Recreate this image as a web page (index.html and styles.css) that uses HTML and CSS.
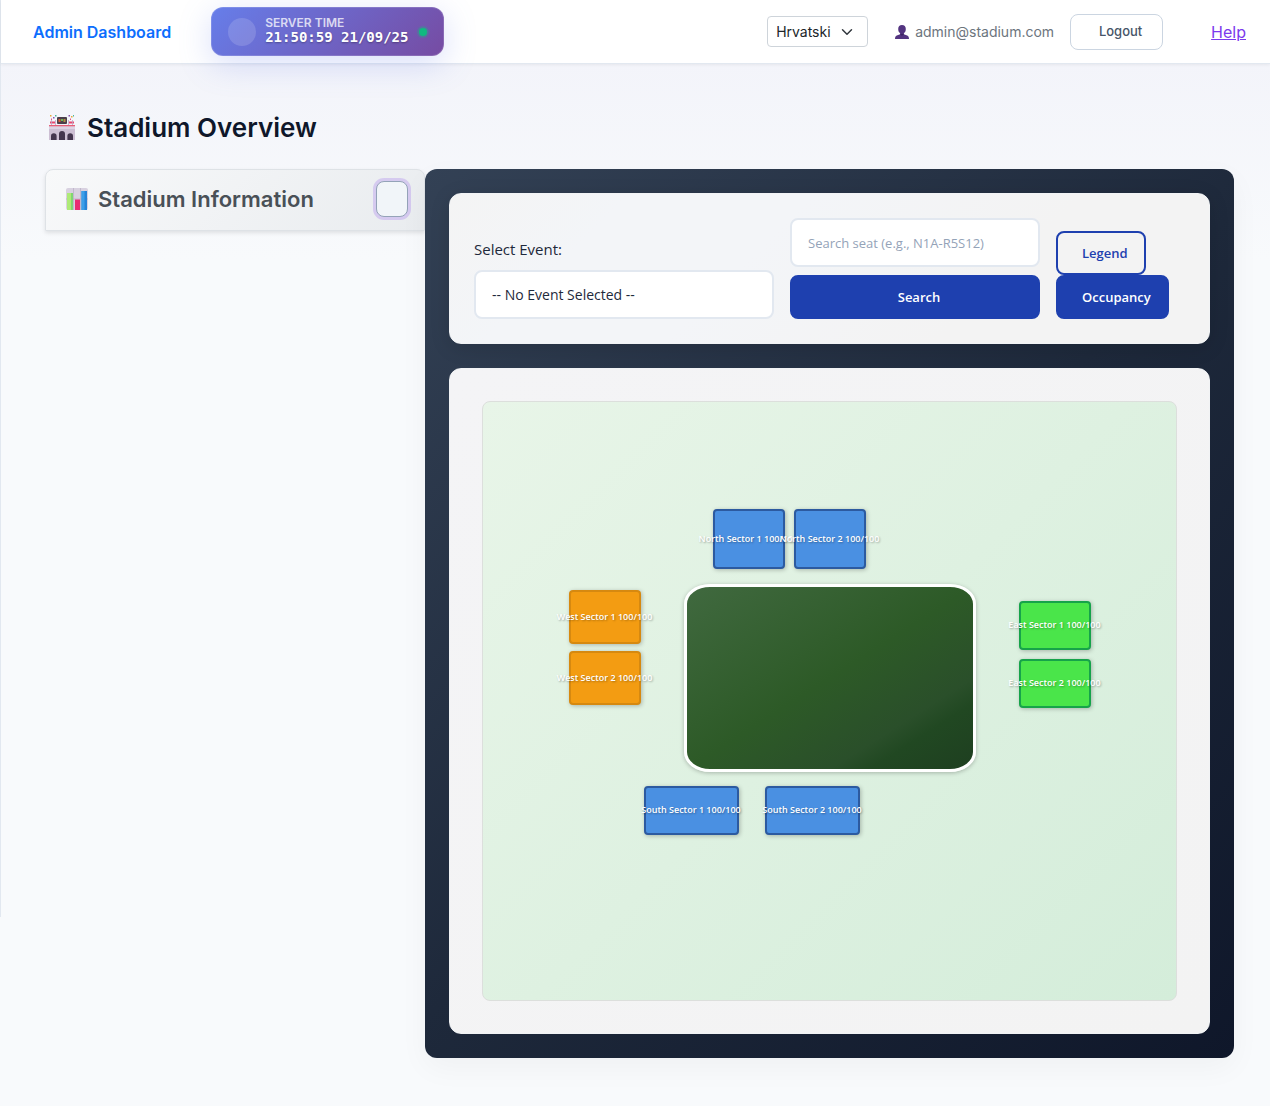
FILE: index.html
```html
<!DOCTYPE html>
<html lang="en">
<head>
  <meta charset="utf-8">
  <meta name="viewport" content="width=device-width, initial-scale=1">
  <title>Admin Dashboard</title>
  <link rel="stylesheet" href="styles.css">
</head>
<body>
  <div class="side-rail"></div>
  <div class="page">
    <header class="topbar">
      <a class="brand" href="#">Admin Dashboard</a>
      <div class="clock">
        <span class="clock-disc"></span>
        <div class="clock-text">
          <span class="clock-label">SERVER TIME</span>
          <span class="clock-value">21:50:59 21/09/25</span>
        </div>
        <span class="clock-status"></span>
      </div>
      <div class="account">
        <select class="language" aria-label="Language">
          <option>Hrvatski</option>
          <option>English</option>
        </select>
        <div class="user">
          <svg class="user-icon" viewBox="0 0 14 14" aria-hidden="true">
            <path d="M7 0C4.600 0 3.200 1.600 3.200 4c0 2 .8 3.600 2 4.300v1L1.800 10.400C.6 10.800 0 12 0 14h14c0-2-.6-3.200-1.800-3.600L8.800 9.300v-1c1.200-.7 2-2.300 2-4.300C10.800 1.600 9.400 0 7 0z" fill="#533480"/>
            <path d="M5.200 8.300c1 .8 2.600.8 3.600 0v1.200L7 10.700 5.200 9.500z" fill="#3c2363"/>
          </svg>
          <span>admin@stadium.com</span>
        </div>
        <button class="logout" type="button">Logout</button>
        <a class="help" href="#">Help</a>
      </div>
    </header>

    <main class="content">
      <h1 class="page-title">
        <svg class="title-icon" viewBox="0 0 26 25" aria-hidden="true">
          <path d="M2 8h22v3H2z" fill="#f4eff8"/>
          <path d="M1 6.500h5v2H1zM20 6.500h5v2h-5z" fill="#e8476f"/>
          <path d="M2.500 5v6M6.500 5v6M19.500 5v6M23.500 5v6" stroke="#b9a6c4" stroke-width=".8"/>
          <rect x="8" y="2" width="10" height="7" rx="1" fill="#4b3f4b"/>
          <path d="M9.500 4h2v3h-2z" fill="#db5a3c"/><path d="M12 4h2v2h-2z" fill="#68b858"/><path d="M14.500 4h2v3h-2z" fill="#b28d45"/>
          <path d="M1 0h1.500v1.500H1zM22 1h1.500v1.500H22z" fill="#e7a93c"/>
          <path d="M4 2h1.500v1.500H4zM19.500 0H21v1.500h-1.500z" fill="#8c55b2"/>
          <path d="M6 0h1.500v1.500H6zM24 0h1v1.500h-1z" fill="#47b7a0"/>
          <path d="M2 3.500h1V5H2zM21 3.500h1V5h-1z" fill="#e0578a"/>
          <path d="M0 10h26v15H0z" fill="#cdbfd4"/>
          <path d="M0 10h26v1.500H0z" fill="#e95f78"/>
          <path d="M0 11.500h26V14H0z" fill="#ded3e4"/>
          <path d="M2 25v-4a2.800 2.800 0 0 1 5.600 0v4zM10 25v-6a3 3 0 0 1 6 0v6zM18.400 25v-4a2.800 2.800 0 0 1 5.600 0v4z" fill="#44364f"/>
        </svg>
        Stadium Overview
      </h1>

      <div class="overview">
        <section class="info-card">
          <h2 class="info-title">
            <svg class="chart-icon" viewBox="0 0 22 22" aria-hidden="true">
              <rect width="22" height="22" rx="2" fill="#d8d1e0"/>
              <path d="M7.500 0v22M14.500 0v22M0 11h22" stroke="#b7aec3" stroke-width=".7"/>
              <path d="M1 5h6v17H1z" fill="#7fd672"/><path d="M1 5h4v17H1z" fill="#aeea77"/>
              <path d="M9 11.500h5V22H9z" fill="#e92c72"/>
              <path d="M15.500 3H21v19h-5.500z" fill="#2684d8"/><path d="M15.500 3h3v19h-3z" fill="#3c9fe8"/>
            </svg>
            Stadium Information
          </h2>
          <button class="info-toggle" type="button" aria-label="Toggle stadium information"></button>
        </section>

        <section class="panel">
          <form class="toolbar">
            <div class="field event-field">
              <label for="event">Select Event:</label>
              <select id="event" class="control">
                <option>-- No Event Selected --</option>
              </select>
            </div>
            <div class="field search-field">
              <input class="control" type="text" placeholder="Search seat (e.g., N1A-R5S12)" aria-label="Search seat">
              <button class="button button-search" type="button">Search</button>
            </div>
            <div class="actions">
              <button class="button button-outline" type="button">Legend</button>
              <button class="button button-indent" type="button">Occupancy</button>
            </div>
          </form>

          <div class="map-card">
            <div class="map">
              <div class="pitch"></div>
              <button type="button" class="sector blue north north-1"><span>North Sector 1 100/100</span></button>
              <button type="button" class="sector blue north north-2"><span>North Sector 2 100/100</span></button>
              <button type="button" class="sector orange west-1"><span>West Sector 1 100/100</span></button>
              <button type="button" class="sector orange west-2"><span>West Sector 2 100/100</span></button>
              <button type="button" class="sector green east-1"><span>East Sector 1 100/100</span></button>
              <button type="button" class="sector green east-2"><span>East Sector 2 100/100</span></button>
              <button type="button" class="sector blue south south-1"><span>South Sector 1 100/100</span></button>
              <button type="button" class="sector blue south south-2"><span>South Sector 2 100/100</span></button>
            </div>
          </div>
        </section>
      </div>
    </main>
  </div>
</body>
</html>
```

FILE: styles.css
```css
* {
  box-sizing: border-box;
}

body {
  margin: 0;
  min-height: 100vh;
  display: flex;
  align-items: flex-start;
  background: linear-gradient(#f3f4fa 60px, #f8fafc 260px) no-repeat #f8fafc;
  color: #0f172a;
  font-family: Inter, "Liberation Sans", sans-serif;
  font-size: 16px;
}

button,
input,
select {
  font: inherit;
}

.side-rail {
  height: 917px;
  border-right: 1px solid #e2e8f0;
}

.page {
  flex: 1;
  min-width: 0;
}

/* Header */

.topbar {
  display: flex;
  align-items: center;
  height: 64px;
  padding: 0 24px 0 32px;
  background: #fff;
  border-bottom: 1px solid #e2e8f0;
  box-shadow: 0 1px 3px rgba(0, 0, 0, 0.06);
}

.brand {
  color: #0d6efd;
  font-weight: 600;
  text-decoration: none;
}

.clock {
  display: flex;
  align-items: center;
  height: 49px;
  margin-left: 40px;
  padding: 0 16px;
  border: 1px solid rgba(255, 255, 255, 0.15);
  border-radius: 12px;
  background: linear-gradient(135deg, #667eea, #764ba2) border-box;
  box-shadow: 0 8px 32px rgba(102, 126, 234, 0.25);
  color: #fff;
}

.clock-disc {
  width: 28px;
  height: 28px;
  margin-right: 9px;
  border-radius: 50%;
  background: rgba(255, 255, 255, 0.15);
}

.clock-text {
  display: flex;
  flex-direction: column;
  padding-bottom: 2px;
}

.clock-label {
  font-size: 12px;
  line-height: 12px;
  font-weight: 600;
  opacity: 0.75;
}

.clock-value {
  font-family: "DejaVu Sans Mono", monospace;
  font-size: 14px;
  line-height: 16px;
  font-weight: 700;
  text-shadow: 0 1px 2px rgba(0, 0, 0, 0.3);
}

.clock-status {
  width: 8px;
  height: 8px;
  margin-left: 11px;
  border-radius: 50%;
  background: #10b981;
  box-shadow: 0 0 0 2px rgba(16, 185, 129, 0.3);
}

.account {
  display: flex;
  align-items: center;
  margin-left: auto;
}

.language {
  appearance: none;
  width: 101px;
  height: 31px;
  padding: 0 8px;
  border: 1px solid #ced4da;
  border-radius: 4px;
  background: url("data:image/svg+xml,%3Csvg xmlns='http://www.w3.org/2000/svg' viewBox='0 0 16 16'%3E%3Cpath fill='none' stroke='%23343a40' stroke-linecap='round' stroke-linejoin='round' stroke-width='2' d='m2 5 6 6 6-6'/%3E%3C/svg%3E") no-repeat right 14px center / 12px 12px #fff;
  color: #212529;
  font-size: 14px;
}

.user {
  display: flex;
  align-items: center;
  gap: 6px;
  margin-left: 27px;
  color: #6c757d;
  font-size: 14px;
}

.user-icon {
  width: 14px;
  height: 14px;
}

.logout {
  width: 93px;
  height: 36px;
  margin-left: 16px;
  padding: 0 0 2px 8px;
  border: 1px solid #cbd5e1;
  border-radius: 8px;
  background: #fff;
  color: #475569;
  font-size: 13px;
  font-weight: 500;
}

.help {
  margin-left: 48px;
  color: #7c3aed;
}

/* Page body */

.content {
  padding: 44px 36px 48px 44px;
}

.page-title {
  display: flex;
  align-items: center;
  gap: 12px;
  height: 38px;
  margin: 0 0 23px;
  padding-left: 4px;
  font-size: 26px;
  font-weight: 600;
}

.title-icon {
  width: 26px;
  height: 25px;
}

.overview {
  display: flex;
  align-items: flex-start;
}

.info-card {
  display: flex;
  align-items: center;
  justify-content: space-between;
  flex: 0 0 380px;
  height: 62px;
  padding: 0 16px 2px 20px;
  border: 1px solid #dee2e6;
  border-radius: 8px 8px 0 0;
  background: linear-gradient(135deg, #f8f9fa, #e9ecef);
  box-shadow: 0 2px 4px rgba(0, 0, 0, 0.1);
}

.info-title {
  display: flex;
  align-items: center;
  gap: 10px;
  margin: 0;
  color: #495057;
  font-size: 22px;
  font-weight: 600;
}

.chart-icon {
  width: 22px;
  height: 22px;
}

.info-toggle {
  width: 32px;
  height: 36px;
  padding: 0;
  border: 1px solid #94a3b8;
  border-radius: 8px;
  background: #f1f5f9;
  box-shadow: 0 0 0 3px rgba(124, 58, 237, 0.2);
}

.panel {
  flex: 1;
  min-width: 0;
  display: flex;
  flex-direction: column;
  gap: 24px;
  padding: 24px;
  border-radius: 12px;
  background: linear-gradient(135deg, #334155, #1e293b 50%, #0f172a);
  box-shadow: 0 10px 30px rgba(0, 0, 0, 0.04);
  color: #1e293b;
  font-family: "Open Sans", "Noto Sans", sans-serif;
}

.toolbar,
.map-card {
  border: 1px solid #f1f3f5;
  border-radius: 12px;
}

/* Toolbar */

.toolbar {
  display: flex;
  align-items: flex-end;
  flex-wrap: wrap;
  gap: 16px;
  padding: 24px;
  background: linear-gradient(135deg, #f4f4f4, #f3f5f8 20%, #f3f5f8 40%, #f3f3f3 70%);
  box-shadow: 0 4px 20px rgba(0, 0, 0, 0.12);
}

.field {
  display: flex;
  flex-direction: column;
  gap: 8px;
}

.event-field {
  width: 300px;
  gap: 9px;
  font-size: 15px;
  line-height: 24px;
}

.search-field {
  width: 250px;
}

.control {
  appearance: none;
  width: 100%;
  height: 49px;
  padding: 0 16px;
  border: 2px solid #e2e8f0;
  border-radius: 8px;
  background: #fff;
  color: #1e293b;
  font-size: 13px;
}

select.control {
  font-size: 14px;
}

.control::placeholder {
  color: #94a3b8;
}

.button {
  height: 44px;
  padding: 0 16px;
  border: 2px solid #1e40af;
  border-radius: 8px;
  background: #1e40af;
  color: #fff;
  font-size: 13px;
  font-weight: 600;
}

.actions {
  display: flex;
  flex-direction: column;
  align-items: flex-start;
}

.button-search,
.button-outline,
.button-indent {
  padding-left: 24px;
}

.button-outline {
  background: transparent;
  color: #1e40af;
}

/* Seat map */

.map-card {
  padding: 32px;
  background: linear-gradient(135deg, #f4f4f6, #f3f3f3);
}

.map {
  position: relative;
  height: 600px;
  border: 1px solid #dcdfdc;
  border-radius: 8px;
  background: linear-gradient(135deg, #e8f5e8, #d4edda);
}

.pitch {
  position: absolute;
  left: calc(50% - 146px);
  top: 182px;
  width: 292px;
  height: 188px;
  border: 3px solid #fff;
  border-radius: 26px / 20px;
  background: linear-gradient(to bottom right, #40693f, #2d5a27 50%, #2a4f2a 75%, #214822 82%, #1e3f20);
  box-shadow: 0 1px 4px rgba(0, 0, 0, 0.25);
}

.sector {
  position: absolute;
  display: flex;
  align-items: center;
  justify-content: center;
  width: 72px;
  padding: 0 0 2px;
  border: 2px solid;
  border-radius: 4px;
  box-shadow: 1px 1px 4px rgba(0, 0, 0, 0.25);
  color: #fff;
  font-size: 9px;
  font-weight: 600;
  text-shadow: 1px 1px 2px rgba(0, 0, 0, 0.3);
  white-space: nowrap;
}

.blue {
  background: #4a90e2;
  border-color: #2c5aa0;
}

.orange {
  height: 54px;
  background: #f39c12;
  border-color: #d68910;
}

.green {
  height: 49px;
  background: #4ae54a;
  border-color: #16a34a;
}

.north {
  top: 107px;
  height: 60px;
}

.north-1 { left: calc(50% - 117px); }
.north-2 { left: calc(50% - 36px); }

.west-1,
.west-2 { left: calc(50% - 261px); }
.west-1 { top: 188px; }
.west-2 { top: 249px; }

.east-1,
.east-2 { left: calc(50% + 189px); }
.east-1 { top: 199px; }
.east-2 { top: 257px; }

.south {
  top: 384px;
  width: 95px;
  height: 49px;
}

.south-1 { left: calc(50% - 186px); }
.south-2 { left: calc(50% - 65px); }
```
